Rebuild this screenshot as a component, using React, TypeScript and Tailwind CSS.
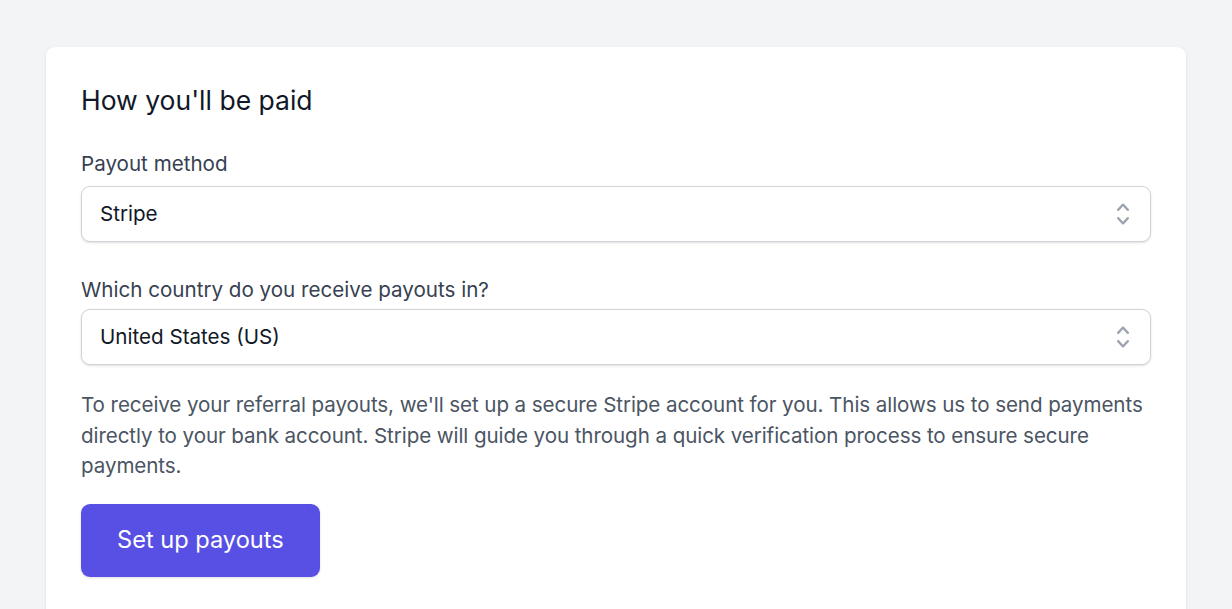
import { useState } from 'react';

const methods = ['Stripe', 'PayPal'];
const countries = ['United States (US)', 'Canada (CA)', 'United Kingdom (GB)'];

function SelectorIcon() {
  return (
    <svg viewBox="0 0 20 20" fill="currentColor" className="w-[30px] h-[30px] text-[#9ca3af]" aria-hidden="true">
      <path
        fillRule="evenodd"
        d="M10 3a.75.75 0 01.55.24l3.25 3.5a.75.75 0 11-1.1 1.02L10 4.852 7.3 7.76a.75.75 0 01-1.1-1.02l3.25-3.5A.75.75 0 0110 3zm-3.76 9.2a.75.75 0 011.06.04l2.7 2.908 2.7-2.908a.75.75 0 111.1 1.02l-3.25 3.5a.75.75 0 01-1.1 0l-3.25-3.5a.75.75 0 01.04-1.06z"
        clipRule="evenodd"
      />
    </svg>
  );
}

function Select({ value, options, onChange }: { value: string; options: string[]; onChange: (v: string) => void }) {
  return (
    <div className="relative">
      <select
        value={value}
        onChange={e => onChange(e.target.value)}
        className="appearance-none w-full h-[56px] rounded-[9px] border border-[#d1d5db] bg-white pl-[18px] pr-12 text-[20.6px] text-[#111827] shadow-sm outline-none"
      >
        {options.map(o => (
          <option key={o} value={o}>{o}</option>
        ))}
      </select>
      <span className="pointer-events-none absolute right-[13px] top-1/2 -translate-y-1/2">
        <SelectorIcon />
      </span>
    </div>
  );
}

export default function App() {
  const [method, setMethod] = useState('Stripe');
  const [country, setCountry] = useState('United States (US)');

  return (
    <div className="min-h-screen bg-[#f3f4f6] px-[46px] pt-[47px] font-['Inter',sans-serif]">
      <div className="bg-white rounded-t-[9px] shadow-sm px-[35px] pt-[33px] pb-[36px]">
        <h2 className="text-[26.5px] leading-[40px] font-normal text-[#111827]">How you'll be paid</h2>

        <div className="mt-[29px]">
          <label className="block text-[20.6px] leading-[30px] font-normal text-[#374151]">Payout method</label>
          <div className="mt-[7px]">
            <Select value={method} options={methods} onChange={setMethod} />
          </div>
        </div>

        <div className="mt-[33px]">
          <label className="block text-[20.6px] leading-[30px] font-normal text-[#374151]">
            Which country do you receive payouts in?
          </label>
          <div className="mt-[4px]">
            <Select value={country} options={countries} onChange={setCountry} />
          </div>
        </div>

        <p className="mt-[25px] text-[20.6px] leading-[30.5px] tracking-[-0.09px] text-[#4b5563]">
          To receive your referral payouts, we'll set up a secure Stripe account for you. This allows us to send payments
          directly to your bank account. Stripe will guide you through a quick verification process to ensure secure
          payments.
        </p>

        <button className="mt-[22px] h-[73px] px-[36px] rounded-[9px] bg-[#5850e4] text-white text-[23.6px] font-normal shadow-sm">
          Set up payouts
        </button>
      </div>
    </div>
  );
}
